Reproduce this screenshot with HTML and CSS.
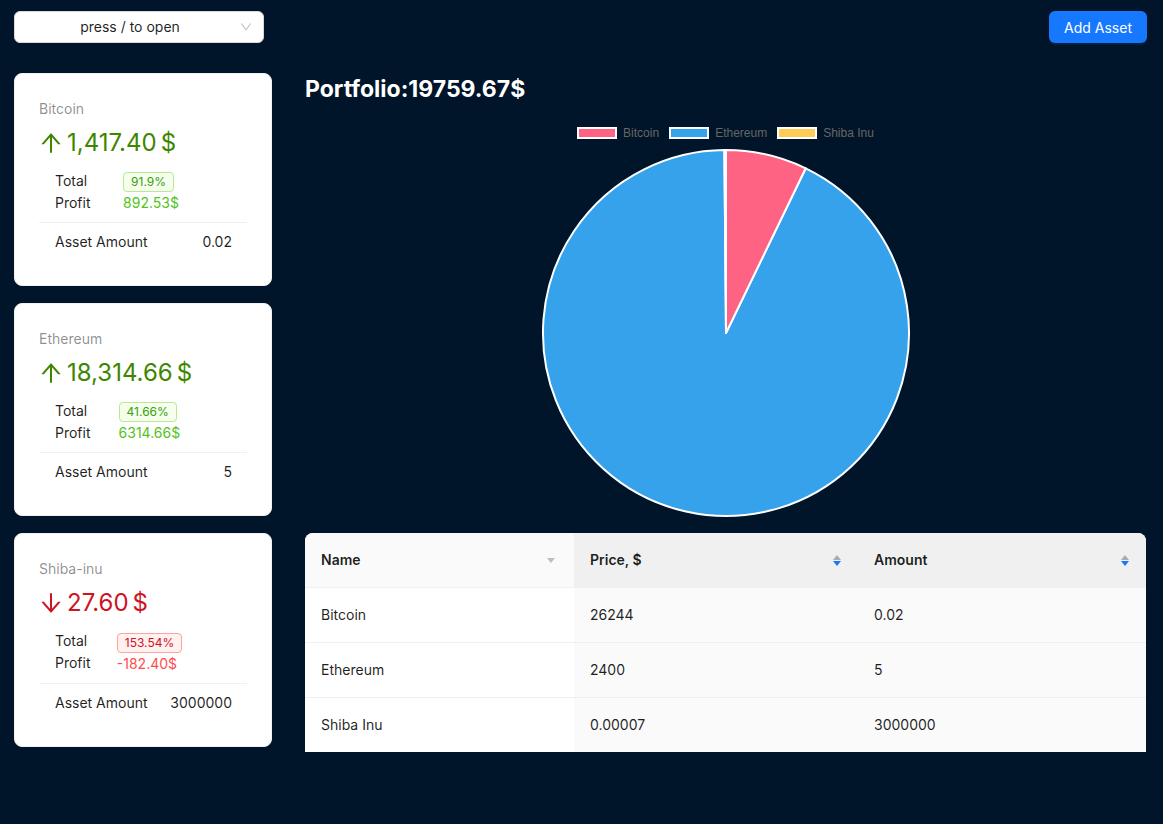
FILE: index.html
```html
<!DOCTYPE html>
<html lang="en">
<head>
<meta charset="utf-8">
<title>Crypto Portfolio</title>
<link rel="stylesheet" href="styles.css">
</head>
<body>
<div class="app">
  <header class="topbar">
    <div class="select">
      <span class="select-text">press / to open</span>
      <svg class="select-arrow" viewBox="64 64 896 896" width="12" height="12"><path d="M884 256h-75c-5.1 0-9.9 2.5-12.9 6.6L512 654.2 227.9 262.6c-3-4.1-7.8-6.6-12.9-6.6h-75c-6.5 0-10.300 7.4-6.500 12.7l352.600 486.100c12.800 17.600 39 17.600 51.700 0l352.600-486.100c3.900-5.300.1-12.700-6.400-12.700z" fill="currentColor"/></svg>
    </div>
    <button class="btn-primary">Add Asset</button>
  </header>

  <main class="main">
    <aside class="sider">
      <section class="card">
        <div class="stat-title">Bitcoin</div>
        <div class="stat-value up">
          <svg class="arrow" viewBox="64 64 896 896" width="24" height="24"><path fill="currentColor" d="M868 545.5L536.1 163a31.96 31.96 0 00-48.3 0L156 545.5a7.97 7.97 0 006 13.2h81c4.6 0 9-2 12.1-5.5L474 300.9V864c0 4.4 3.6 8 8 8h60c4.4 0 8-3.6 8-8V300.9l218.9 252.3c3 3.5 7.4 5.5 12.1 5.5h81c6.8 0 10.5-8 6-13.2z"/></svg>
          <span>1,417.40</span><span class="suffix">$</span>
        </div>
        <ul class="stat-list">
          <li class="stat-row">
            <span class="stat-label">Total Profit</span>
            <span class="stat-data"><span class="tag tag-green">91.9%</span><span class="profit-green">892.53$</span></span>
          </li>
          <li class="stat-row">
            <span>Asset Amount</span>
            <span>0.02</span>
          </li>
        </ul>
      </section>

      <section class="card">
        <div class="stat-title">Ethereum</div>
        <div class="stat-value up">
          <svg class="arrow" viewBox="64 64 896 896" width="24" height="24"><path fill="currentColor" d="M868 545.5L536.1 163a31.96 31.96 0 00-48.3 0L156 545.5a7.97 7.97 0 006 13.2h81c4.6 0 9-2 12.1-5.5L474 300.9V864c0 4.4 3.6 8 8 8h60c4.4 0 8-3.6 8-8V300.9l218.9 252.3c3 3.5 7.4 5.5 12.1 5.5h81c6.8 0 10.5-8 6-13.2z"/></svg>
          <span>18,314.66</span><span class="suffix">$</span>
        </div>
        <ul class="stat-list">
          <li class="stat-row">
            <span class="stat-label">Total Profit</span>
            <span class="stat-data"><span class="tag tag-green">41.66%</span><span class="profit-green">6314.66$</span></span>
          </li>
          <li class="stat-row">
            <span>Asset Amount</span>
            <span>5</span>
          </li>
        </ul>
      </section>

      <section class="card">
        <div class="stat-title">Shiba-inu</div>
        <div class="stat-value down">
          <svg class="arrow" viewBox="64 64 896 896" width="24" height="24"><path fill="currentColor" d="M862 465.3h-81c-4.6 0-9 2-12.1 5.5L550 723.1V160c0-4.4-3.6-8-8-8h-60c-4.4 0-8 3.6-8 8v563.1L255.1 470.8c-3-3.5-7.4-5.500-12.1-5.500h-81c-6.8 0-10.5 8.1-6 13.2L487.9 861a31.96 31.96 0 0048.3 0L868 478.5c4.4-5.2.8-13.2-6-13.2z"/></svg>
          <span>27.60</span><span class="suffix">$</span>
        </div>
        <ul class="stat-list">
          <li class="stat-row">
            <span class="stat-label">Total Profit</span>
            <span class="stat-data"><span class="tag tag-red">153.54%</span><span class="profit-red">-182.40$</span></span>
          </li>
          <li class="stat-row">
            <span>Asset Amount</span>
            <span>3000000</span>
          </li>
        </ul>
      </section>
    </aside>

    <section class="content">
      <h3 class="portfolio-title">Portfolio:19759.67$</h3>

      <div class="chart">
        <div class="legend">
          <span class="legend-item"><span class="legend-box lb-pink"></span>Bitcoin</span>
          <span class="legend-item"><span class="legend-box lb-blue"></span>Ethereum</span>
          <span class="legend-item"><span class="legend-box lb-yellow"></span>Shiba Inu</span>
        </div>
        <svg class="pie" width="370" height="370" viewBox="0 0 370 370">
          <g stroke="#fff" stroke-width="2" stroke-linejoin="round">
            <path fill="#36a2eb" d="M185 185 L264.71 20.28 A183 183 0 1 1 183.39 2.01 Z"/>
            <path fill="#ffcd56" d="M185 185 L183.39 2.01 A183 183 0 0 1 185 2 Z"/>
            <path fill="#ff6384" d="M185 185 L185 2 A183 183 0 0 1 264.71 20.28 Z"/>
          </g>
        </svg>
      </div>

      <table class="assets">
        <colgroup>
          <col class="col-name">
          <col class="col-price">
          <col class="col-amount">
        </colgroup>
        <thead>
          <tr>
            <th class="th-name">
              <div class="th-inner"><span>Name</span>
                <svg class="filter-caret" viewBox="0 0 8 5" width="8" height="5"><path d="M0 0h8L4 5z" fill="currentColor"/></svg>
              </div>
            </th>
            <th class="th-sort">
              <div class="th-inner"><span>Price, $</span>
                <span class="sorter">
                  <svg viewBox="0 0 8 5" width="8" height="5"><path d="M0 5h8L4 0z" fill="currentColor"/></svg>
                  <svg class="active" viewBox="0 0 8 5" width="8" height="5"><path d="M0 0h8L4 5z" fill="currentColor"/></svg>
                </span>
              </div>
            </th>
            <th class="th-sort">
              <div class="th-inner"><span>Amount</span>
                <span class="sorter">
                  <svg viewBox="0 0 8 5" width="8" height="5"><path d="M0 5h8L4 0z" fill="currentColor"/></svg>
                  <svg class="active" viewBox="0 0 8 5" width="8" height="5"><path d="M0 0h8L4 5z" fill="currentColor"/></svg>
                </span>
              </div>
            </th>
          </tr>
        </thead>
        <tbody>
          <tr><td>Bitcoin</td><td class="td-sorted">26244</td><td class="td-sorted">0.02</td></tr>
          <tr><td>Ethereum</td><td class="td-sorted">2400</td><td class="td-sorted">5</td></tr>
          <tr><td>Shiba Inu</td><td class="td-sorted">0.00007</td><td class="td-sorted">3000000</td></tr>
        </tbody>
      </table>
    </section>
  </main>
</div>
</body>
</html>
```

FILE: styles.css
```css
* { box-sizing: border-box; }

html, body {
  margin: 0;
  padding: 0;
}

body {
  background: #001529;
  font-family: Inter, "Noto Sans", "Liberation Sans", sans-serif;
  font-size: 14px;
  line-height: 22px;
  color: rgba(0, 0, 0, 0.88);
}

.app {
  min-height: 824px;
  background: #001529;
}

/* ---------- top bar ---------- */
.topbar {
  display: flex;
  justify-content: space-between;
  align-items: center;
  padding: 11px 16px 0 14px;
}

.select {
  width: 250px;
  height: 32px;
  background: #fff;
  border: 1px solid #d9d9d9;
  border-radius: 6px;
  display: flex;
  align-items: center;
  padding: 0 11px;
}

.select-text {
  flex: 1;
  text-align: center;
  color: rgba(0, 0, 0, 0.88);
  padding-right: 6px;
}

.select-arrow {
  color: rgba(0, 0, 0, 0.25);
  flex: none;
}

.btn-primary {
  height: 32px;
  padding: 0 15px;
  border: none;
  border-radius: 6px;
  background: #1677ff;
  color: #fff;
  font-family: inherit;
  font-size: 14px;
  box-shadow: 0 2px 0 rgba(5, 145, 255, 0.1);
}

/* ---------- main ---------- */
.main {
  display: flex;
  gap: 33px;
  padding: 30px 17px 0 14px;
}

.sider {
  flex: none;
  width: 258px;
  display: flex;
  flex-direction: column;
  gap: 17px;
}

.card {
  background: #fff;
  border: 1px solid #f0f0f0;
  border-radius: 8px;
  padding: 24px;
}

.stat-title {
  color: rgba(0, 0, 0, 0.45);
  font-size: 14px;
  line-height: 22px;
  margin-bottom: 4px;
}

.stat-value {
  font-size: 24px;
  line-height: 38px;
  display: flex;
  align-items: center;
  white-space: nowrap;
}

.stat-value.up { color: #3f8600; }
.stat-value.down { color: #cf1322; }

.arrow {
  margin-right: 4px;
  flex: none;
}

.suffix {
  margin-left: 4px;
}

.stat-list {
  list-style: none;
  margin: 0;
  padding: 0;
}

.stat-row {
  display: flex;
  justify-content: space-between;
  align-items: center;
  padding: 8px 15px 8px 16px;
}

.stat-row + .stat-row {
  border-top: 1px solid rgba(5, 5, 5, 0.06);
}

.stat-label {
  min-width: 0;
}

.stat-data {
  min-width: 0;
}

.tag {
  display: inline-block;
  font-size: 12px;
  line-height: 18px;
  padding: 0 7px;
  border-radius: 4px;
  border: 1px solid;
  margin-right: 8px;
  vertical-align: middle;
}

.tag-green {
  color: #389e0d;
  background: #f6ffed;
  border-color: #b7eb8f;
}

.tag-red {
  color: #cf1322;
  background: #fff1f0;
  border-color: #ffa39e;
}

.profit-green { color: #52c41a; }
.profit-red { color: #ff4d4f; }

/* ---------- content ---------- */
.content {
  flex: 1;
  min-width: 0;
}

.portfolio-title {
  margin: 0;
  color: #fff;
  font-size: 23px;
  line-height: 32px;
  font-weight: 700;
}

.chart {
  display: flex;
  flex-direction: column;
  align-items: center;
}

.legend {
  display: flex;
  gap: 10px;
  margin-top: 21px;
  height: 14px;
  font-family: "Liberation Sans", Arial, sans-serif;
  font-size: 12px;
  line-height: 14px;
  color: #666;
}

.legend-item {
  display: flex;
  align-items: center;
  gap: 6px;
}

.legend-box {
  width: 40px;
  height: 12px;
  border: 2px solid #fff;
}

.lb-pink { background: #ff6384; }
.lb-blue { background: #36a2eb; }
.lb-yellow { background: #ffcd56; }

.pie {
  display: block;
  margin-top: 8px;
}

/* ---------- table ---------- */
.assets {
  width: 100%;
  margin-top: 15px;
  border-collapse: separate;
  border-spacing: 0;
  table-layout: fixed;
  background: #fff;
  border-radius: 8px 8px 0 0;
}

.col-name { width: 269px; }
.col-price { width: 284px; }

.assets th,
.assets td {
  padding: 16px;
  text-align: left;
  border-bottom: 1px solid #f0f0f0;
  line-height: 22px;
}

.assets tbody tr:last-child td {
  border-bottom: none;
}

.assets th {
  font-weight: 600;
  background: #fafafa;
  color: rgba(0, 0, 0, 0.88);
}

.assets th:first-child { border-top-left-radius: 8px; }
.assets th:last-child { border-top-right-radius: 8px; }

.assets th.th-sort {
  background: #f0f0f0;
}

.th-inner {
  display: flex;
  align-items: center;
  justify-content: space-between;
}

.filter-caret {
  color: #bfbfbf;
  margin-right: 3px;
}

.sorter {
  display: flex;
  flex-direction: column;
  gap: 1px;
  color: rgba(0, 0, 0, 0.29);
  margin-right: 1px;
}

.sorter svg { display: block; }
.sorter .active { color: #1677ff; }

.td-sorted {
  background: #fafafa;
}
```
